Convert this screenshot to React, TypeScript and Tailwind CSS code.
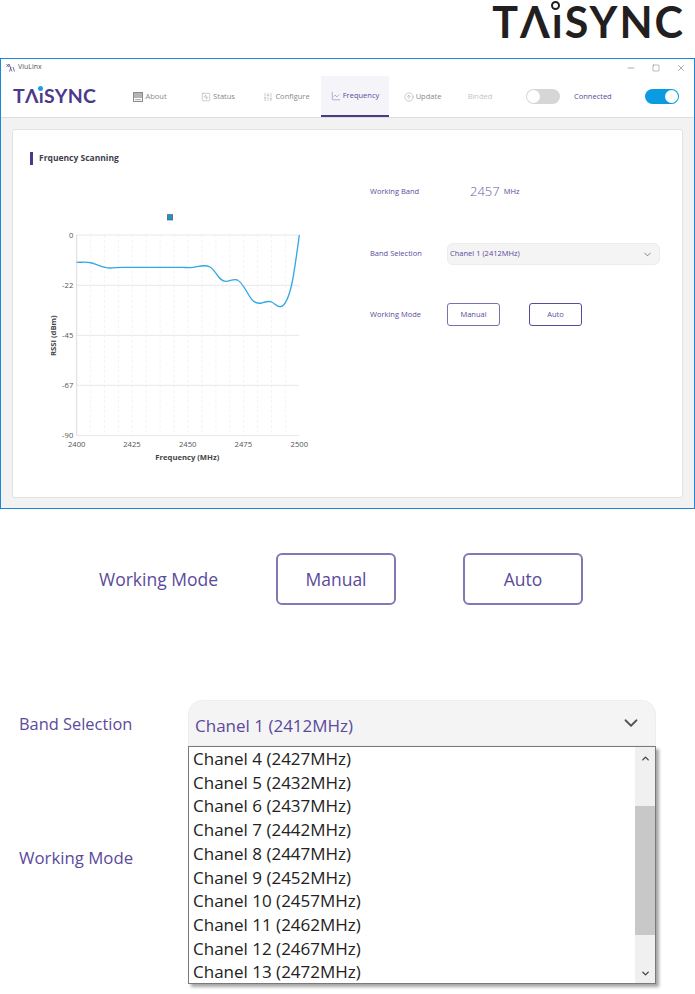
import { ChartLine, ChevronDown, ChevronUp, CircleArrowUp, Minus, SlidersVertical, Square, SquareActivity, X } from "lucide-react";

const channels = [
  "Chanel 4 (2427MHz)",
  "Chanel 5 (2432MHz)",
  "Chanel 6 (2437MHz)",
  "Chanel 7 (2442MHz)",
  "Chanel 8 (2447MHz)",
  "Chanel 9 (2452MHz)",
  "Chanel 10 (2457MHz)",
  "Chanel 11 (2462MHz)",
  "Chanel 12 (2467MHz)",
  "Chanel 13 (2472MHz)",
];

function AboutIcon() {
  return (
    <svg width="10" height="10" viewBox="0 0 10 10">
      <rect x="0.5" y="0.5" width="9" height="9" fill="none" stroke="#8a8a8a" />
      <rect x="1" y="1" width="8" height="5" fill="#b5b5b5" />
      <line x1="2" x2="8" y1="7.7" y2="7.7" stroke="#a0a0a0" />
    </svg>
  );
}

const tabs = [
  { label: "About", w: "w-[68px]", icon: <AboutIcon /> },
  { label: "Status", w: "w-[68px]", icon: <SquareActivity size={10} strokeWidth={1} /> },
  { label: "Configure", w: "w-[69px]", icon: <SlidersVertical size={10} strokeWidth={1} /> },
  { label: "Frequency", w: "w-[68px]", icon: <ChartLine size={10} strokeWidth={1} />, active: true },
  { label: "Update", w: "w-[67px]", icon: <CircleArrowUp size={10} strokeWidth={1} /> },
];

const gridX = Array.from({ length: 15 }, (_, i) => 170 + 41.75 * (i + 1));

function Logo({ big }: { big?: boolean }) {
  return (
    <span
      className={
        big
          ? "relative inline-block font-['Lato',sans-serif] font-bold leading-none text-[#231f20] text-[43px] tracking-[2px]"
          : "relative inline-block font-['Lato',sans-serif] font-bold leading-none text-[#4b3a8c] text-[19.5px] tracking-[0.3px]"
      }
    >
      TΛıSYNC
      <span
        className={
          big
            ? "absolute left-[59px] top-[1px] h-[9px] w-[9px] rounded-full border-2 border-[#231f20]"
            : "absolute left-[25px] top-0 h-[5px] w-[5px] rounded-full bg-[#1e9fdc]"
        }
      />
    </span>
  );
}

function Toggle({ on }: { on?: boolean }) {
  return (
    <div
      className={
        on
          ? "flex h-[15px] w-[34px] items-center justify-end rounded-full bg-[#0a9be2] px-px"
          : "flex h-[15px] w-[34px] items-center justify-start rounded-full bg-[#d6d6d6] px-px"
      }
    >
      <div className="h-[13px] w-[13px] rounded-full bg-white" />
    </div>
  );
}

function Chart() {
  return (
    <svg viewBox="0 0 900 810" className="h-[270px] w-[300px]" fontFamily="'Open Sans', sans-serif">
      <rect x="442" y="44" width="16" height="16" fill="#1a92d4" stroke="#555" strokeWidth="2" />
      {gridX.map((x) => (
        <line key={x} x1={x} x2={x} y1="105" y2="707" stroke="#eeeeee" strokeWidth="2" strokeDasharray="9 6" />
      ))}
      {[105, 256, 406, 556, 707].map((y) => (
        <line key={y} x1="170" x2="838" y1={y} y2={y} stroke="#e8e8e8" strokeWidth="3" />
      ))}
      <line x1="170" x2="170" y1="105" y2="707" stroke="#dcdcdc" strokeWidth="3" />
      <path
        d="M170 187 C190 187 200 185 215 189 C235 194 250 204 270 204 C285 204 290 202 310 202 L490 202 C505 203 515 205 530 200 C545 197 558 194 570 201 C590 214 596 244 618 244 C630 244 640 236 652 240 C670 248 680 280 695 298 C705 311 715 311 725 309 C735 306 745 302 755 306 C765 311 772 322 782 320 C800 316 810 280 818 240 C825 200 832 150 838 105"
        fill="none"
        stroke="#33a7e6"
        strokeWidth="4"
      />
      <g fontSize="23" fill="#555" textAnchor="end">
        <text x="160" y="114">0</text>
        <text x="160" y="264">-22</text>
        <text x="160" y="414">-45</text>
        <text x="160" y="565">-67</text>
        <text x="160" y="715">-90</text>
      </g>
      <g fontSize="23" fill="#555" textAnchor="middle">
        <text x="170" y="741">2400</text>
        <text x="336" y="741">2425</text>
        <text x="503" y="741">2450</text>
        <text x="670" y="741">2475</text>
        <text x="838" y="741">2500</text>
      </g>
      <text x="502" y="779" fontSize="23" fontWeight="700" fill="#444" textAnchor="middle">
        Frequency (MHz)
      </text>
      <text transform="translate(108 407) rotate(-90)" fontSize="23" fontWeight="700" fill="#444" textAnchor="middle">
        RSSI (dBm)
      </text>
    </svg>
  );
}

export default function App() {
  return (
    <div className="flex h-[994px] w-[695px] flex-col overflow-hidden bg-white font-['Open_Sans',sans-serif]">
      {/* logo */}
      <div className="flex h-[58px] justify-end pr-[10px]">
        <Logo big />
      </div>

      {/* app window */}
      <div className="flex h-[451px] flex-col border border-[#1c86d8]">
        <div className="flex h-[17px] items-center justify-between pl-[5px] pr-[8px]">
          <div className="flex items-center gap-[3px] text-[7px] text-[#555]">
            <svg width="9" height="9" viewBox="0 0 9 9" fill="none" stroke="#6a5aa0" strokeWidth="0.9">
              <path d="M0.5 1 L3 4 M3 1 L0.5 4 M3 1 L6 8.5 M5 4 L3.5 8.5 M7 4 L8.5 8.5" />
            </svg>
            ViuLinx
          </div>
          <div className="flex items-center gap-[16px] text-[#333]">
            <Minus size={10} strokeWidth={1} />
            <Square size={8} strokeWidth={1} />
            <X size={10} strokeWidth={1} />
          </div>
        </div>

        <div className="flex h-[42px] items-center border-b border-[#dedede]">
          <div className="w-[115px] pl-[12px]">
            <Logo />
          </div>
          {tabs.map(({ label, w, icon, active }) => (
            <div
              key={label}
              className={
                active
                  ? `flex h-full ${w} items-center justify-center gap-[2px] border-b-2 border-[#4b3a8c] bg-[#f5f4f9] text-[7.5px] text-[#5b4a9b]`
                  : `flex h-full ${w} items-center justify-center gap-[2px] pt-[1px] text-[7.5px] text-[#888]`
              }
            >
              {icon}
              {label}
            </div>
          ))}
          <div className="w-[48px] pt-[1px] text-center text-[7.5px] text-[#c4c4c4]">Binded</div>
          <div className="ml-[22px]">
            <Toggle />
          </div>
          <div className="ml-[14px] w-[71px] pt-[1px] text-[7.5px] text-[#5b4a9b]">Connected</div>
          <Toggle on />
        </div>

        <div className="flex-1 bg-[#f2f2f2] px-[11px] pb-[10px] pt-[11px]">
          <div className="flex h-full rounded-[3px] border border-[#e2e2e2] bg-white">
            <div className="w-[340px] pl-[7px]">
              <div className="ml-[10px] mt-[22px] flex h-[13px] items-center gap-[6px] text-[8.5px] font-bold text-[#3f3f4f]">
                <div className="h-[13px] w-[3px] bg-[#4b3a8c]" />
                Frquency Scanning
              </div>
              <div className="mt-[35px]">
                <Chart />
              </div>
            </div>

            <div className="pl-[17px] pt-[51px] text-[7.5px] text-[#5b4a9b]">
              <div className="flex h-[22px] items-center">
                <span className="w-[100px]">Working Band</span>
                <span className="text-[13px] font-light text-[#6a5aa0]">2457</span>
                <span className="ml-[4px]">MHz</span>
              </div>
              <div className="mt-[40px] flex h-[22px] items-center">
                <span className="w-[77px]">Band Selection</span>
                <div className="flex h-[22px] w-[213px] items-center justify-between rounded-[6px] border border-[#ececec] bg-[#f4f4f4] pl-[2px] pr-[6px]">
                  Chanel 1 (2412MHz)
                  <ChevronDown size={11} strokeWidth={1.5} className="text-[#555]" />
                </div>
              </div>
              <div className="mt-[38px] flex h-[23px] items-center">
                <span className="w-[77px]">Working Mode</span>
                <div className="flex h-[23px] w-[53px] items-center justify-center rounded-[3px] border border-[#7f6fb0]">Manual</div>
                <div className="ml-[29px] flex h-[23px] w-[53px] items-center justify-center rounded-[3px] border border-[#5b4a9b]">Auto</div>
              </div>
            </div>
          </div>
        </div>
      </div>

      {/* working mode close-up */}
      <div className="mt-[44px] flex h-[52px] items-center pl-[99px] text-[17.5px] text-[#5b4a9b]">
        <span className="w-[177px] pt-[1px]">Working Mode</span>
        <div className="flex h-[52px] w-[120px] items-center justify-center rounded-[6px] border-2 border-[#8577b5] pt-[1px]">Manual</div>
        <div className="ml-[67px] flex h-[52px] w-[120px] items-center justify-center rounded-[6px] border-2 border-[#8577b5] pt-[1px]">Auto</div>
      </div>

      {/* band selection close-up */}
      <div className="mt-[95px] flex pl-[19px]">
        <div className="w-[169px] text-[16.8px] text-[#5b4a9b]">
          <div className="flex h-[46px] items-center pt-[3px] text-[16.4px]">Band Selection</div>
          <div className="mt-[88px] flex h-[48px] items-center">Working Mode</div>
        </div>
        <div className="w-[468px]">
          <div className="flex h-[46px] items-center justify-between rounded-t-[14px] border border-[#eeeeee] bg-[#f4f4f4] pl-[6px] pr-[13px] text-[17px] text-[#5b4a9b]">
            <span className="pt-[5px]">Chanel 1 (2412MHz)</span>
            <ChevronDown size={22} strokeWidth={2} className="text-[#555]" />
          </div>
          <div className="flex h-[238px] border border-[#7a7a7a] bg-white shadow-[3px_3px_3px_rgba(0,0,0,0.35)]">
            <div className="flex-1 pl-[4px] text-[17px] leading-[23.7px] text-[#222]">
              {channels.map((c) => (
                <div key={c}>{c}</div>
              ))}
            </div>
            <div className="flex w-[20px] flex-col bg-[#f0f0f0]">
              <div className="flex h-[59px] justify-center pt-[6px]">
                <ChevronUp size={11} strokeWidth={3} className="text-[#444]" />
              </div>
              <div className="h-[129px] bg-[#c8c8c8]" />
              <div className="flex flex-1 items-end justify-center pb-[4px]">
                <ChevronDown size={11} strokeWidth={3} className="text-[#444]" />
              </div>
            </div>
          </div>
        </div>
      </div>
    </div>
  );
}
